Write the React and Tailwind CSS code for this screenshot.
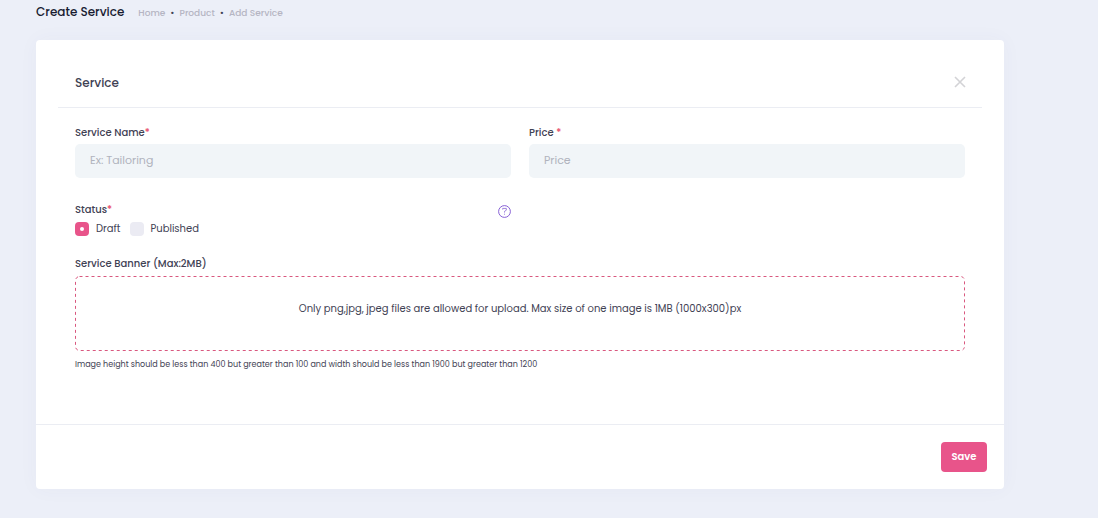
import React, { useState } from 'react';

const breadcrumbs = ['Home', 'Product', 'Add Service'];

const statuses = [
    { value: 'draft', label: 'Draft' },
    { value: 'published', label: 'Published' },
];

const Required = () => <span className="text-[#e8506e]">*</span>;

const CloseIcon = () => (
    <svg width="12" height="12" viewBox="0 0 12 12" fill="none" stroke="#d3d3d6" strokeWidth="1.6" aria-hidden="true">
        <path d="M1 1l10 10M11 1L1 11" />
    </svg>
);

const HelpIcon = () => (
    <svg width="13" height="13" viewBox="0 0 13 13" fill="none" stroke="#7a4fd0" strokeWidth="0.9" aria-hidden="true">
        <circle cx="6.5" cy="6.5" r="5.9" />
        <path d="M4.7 4.6V3.4h3.6v1.8L6.5 6.4v1.2M6.5 8.7v1" strokeWidth="0.7" />
    </svg>
);

// wider dash spacing than border-dashed gives
const DashedOutline = () => (
    <svg className="pointer-events-none absolute inset-0 size-full" aria-hidden="true">
        <rect
            x="0.5"
            y="0.5"
            rx="4"
            fill="none"
            stroke="#d9587f"
            strokeDasharray="3 3"
            style={{ width: 'calc(100% - 1px)', height: 'calc(100% - 1px)' }}
        />
    </svg>
);

const TextField = ({ id, label, placeholder }) => (
    <div className="flex flex-col">
        <label htmlFor={id} className="mb-[3px] text-[10px] leading-4 font-medium">
            {label}
            <Required />
        </label>
        <input
            id={id}
            type="text"
            placeholder={placeholder}
            className="h-[34px] w-full rounded-[5px] bg-[#f1f5f8] px-[15px] pb-0.5 text-[11px] placeholder:text-[#b0b3bd] outline-none"
        />
    </div>
);

const App = () => {
    const [status, setStatus] = useState('draft');

    return (
        <div className="min-h-screen bg-[#eceff8] pr-[94px] pb-7 pl-9 font-[Poppins,Inter,sans-serif] text-[#3f4254]">
            <header className="flex h-10 items-start gap-3.5 pt-1">
                <h1 className="text-[12px] leading-4 font-medium text-[#181c32]">Create Service</h1>
                <nav aria-label="Breadcrumb" className="flex gap-[5px] text-[9px] leading-[18px] font-medium text-[#b5b5c3]">
                    {breadcrumbs.map((crumb, index) => (
                        <React.Fragment key={crumb}>
                            {index > 0 && <span className="text-[#3f4254]">•</span>}
                            <a href="#">{crumb}</a>
                        </React.Fragment>
                    ))}
                </nav>
            </header>

            <form
                onSubmit={(e) => e.preventDefault()}
                className="rounded bg-white shadow-[0_0_20px_rgba(76,87,125,0.04)]"
            >
                <div className="mx-[22px] flex items-start justify-between border-b border-[#ebedf3] pr-4 pl-[17px] pt-[33px] pb-[14px]">
                    <h2 className="text-[12px] leading-5 font-medium">Service</h2>
                    <button type="button" aria-label="Close" className="pt-[3px]">
                        <CloseIcon />
                    </button>
                </div>

                <div className="px-[39px] pt-[17px] pb-[51px]">
                    <div className="grid grid-cols-2 gap-x-[18px]">
                        <TextField id="name" label="Service Name" placeholder="Ex: Tailoring" />
                        <TextField id="price" label="Price " placeholder="Price" />
                    </div>

                    <div className="mt-6 grid grid-cols-2 gap-x-[18px]">
                        <fieldset className="flex flex-col">
                            <div className="flex h-4 items-center justify-between">
                                <legend className="text-[10px] leading-4 font-medium">
                                    Status
                                    <Required />
                                </legend>
                                <button type="button" aria-label="Help" className="pt-[3px]">
                                    <HelpIcon />
                                </button>
                            </div>
                            <div className="mt-[3px] flex gap-[9px]">
                                {statuses.map(({ value, label }) => (
                                    <label key={value} className="flex items-center gap-[7px] text-[10px] leading-4">
                                        <input
                                            type="radio"
                                            name="status"
                                            value={value}
                                            checked={status === value}
                                            onChange={() => setStatus(value)}
                                            className="grid size-3.5 appearance-none place-content-center rounded bg-[#ebebf3] before:size-1 before:rounded-full before:bg-transparent checked:bg-[#e8548a] checked:before:bg-white"
                                        />
                                        {label}
                                    </label>
                                ))}
                            </div>
                        </fieldset>
                    </div>

                    <div className="mt-[19px]">
                        <label htmlFor="banner" className="block text-[10px] leading-4 font-medium">
                            Service Banner (Max:2MB)
                        </label>
                        <label className="relative mt-1 flex h-[75px] cursor-pointer justify-center rounded pt-[25px]">
                            <DashedOutline />
                            <input id="banner" type="file" accept=".png,.jpg,.jpeg" className="sr-only" />
                            <span className="text-[10px] leading-4">
                                Only png,jpg, jpeg files are allowed for upload. Max size of one image is 1MB (1000x300)px
                            </span>
                        </label>
                        <p className="mt-1.5 text-[8px] leading-4">
                            Image height should be less than 400 but greater than 100 and width should be less than 1900 but greater than 1200
                        </p>
                    </div>
                </div>

                <div className="flex justify-end border-t border-[#ebedf3] px-[17px] py-[17px]">
                    <button type="submit" className="h-[30px] w-[46px] rounded bg-[#e8548a] pb-px text-[10px] font-semibold text-white">
                        Save
                    </button>
                </div>
            </form>
        </div>
    );
};

export default App;
